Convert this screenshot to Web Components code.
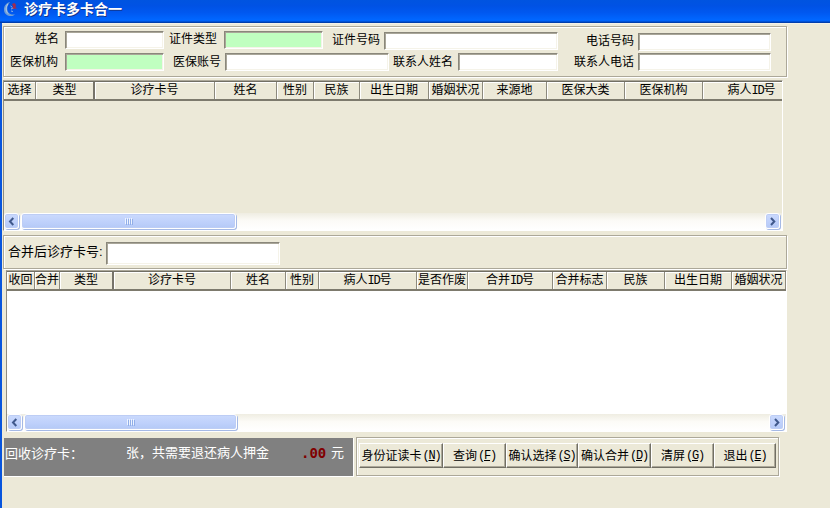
<!DOCTYPE html>
<html lang="zh-CN">
<head>
<meta charset="utf-8">
<title>诊疗卡多卡合一</title>
<style>
html,body{margin:0;height:508px;overflow:hidden;background:#ece9d8}
body{font:12px/14px "Liberation Sans","Noto Sans CJK SC",sans-serif;color:#000}
</style>
</head>
<body>
<card-merge-window></card-merge-window>
<script>
function define(name, html, setup){
  customElements.define(name, class extends HTMLElement{
    connectedCallback(){
      if(this.shadowRoot) return;
      const root=this.attachShadow({mode:'open'});
      const t=document.createElement('template');
      t.innerHTML='<style>:host{box-sizing:border-box}*{box-sizing:border-box}</style>'+html;
      root.append(t.content.cloneNode(true));
      if(setup) setup(this,root);
    }
  });
}

define('title-bar',`<style>
:host{display:flex;height:23px;padding-left:3px;background:linear-gradient(#0054e0 0,#0052e4 25%,#0058f0 55%,#0066ff 85%,#0062f8 91%,#0040b4 96%,#003ba5 100%);color:#fff}
svg{flex:none;margin-top:1px;width:16px;height:17px}
b{margin:1px 0 0 5px;font-size:14px;line-height:16px;white-space:nowrap;text-shadow:1px 1px #10368f}
</style>
<svg viewBox="0 0 16 17"><path d="M7 1C3 2 .8 5 1 9c.3 4 3.500 6 7 6 2 0 3-.6 4-1.500-3 .4-5.500-.2-7-2.500C3.500 8 4 4.500 7 1z" fill="#6f9fd8"/><path d="M5 3C2.500 6 2.500 10 5 12.500" stroke="#b9cfe8" fill="none"/><path d="M7.500 5l2 1.500M8 8l3-1M8 10l2 .5" stroke="#8db2e4" fill="none"/><path d="M9 3l2.500-1L13 4l-.5 2 1.500 2-2-.5L9.500 8 10 5z" fill="#a02c50"/></svg><b><slot></slot></b>`);

define('etched-panel',`<style>
:host{display:flex;border:1px solid #aca899;box-shadow:inset 1px 1px #fff,1px 1px #fff}
</style><slot></slot>`);

define('form-field',`<style>
:host{display:flex;flex:none;white-space:nowrap}
label{flex:none;width:var(--lw);line-height:16px;padding-top:var(--drop,0px)}
i{flex:none;width:var(--iw);height:var(--ih,18px);background:var(--fill,#fff);border:1px solid;border-color:#8a877b #fff #fff #8a877b;box-shadow:inset 1px 1px #a9a699,inset -1px -1px #f5f3e9}
</style><label><slot></slot></label><i></i>`);

define('latin-text',`<style>:host{display:inline-block;font:12px/12px "Liberation Mono",monospace;letter-spacing:-1.2px;vertical-align:baseline}</style><slot></slot>`);

define('grid-header',`<style>
:host{display:flex;height:19px;overflow:hidden;background:#ece9d8;border-bottom:2px solid #7d7a6d}
span{flex:none;height:17px;line-height:17px;text-align:center;white-space:nowrap;border-right:1px solid #8d8a7d;box-shadow:inset 1px 1px #fff}
span.strong{border-right:2px solid #77746a}
</style>`,(el,root)=>{
  el.getAttribute('columns').split(',').forEach((c,i)=>{
    const [label,w]=c.split(':'),s=document.createElement('span');
    s.style.width=w+'px';
    if(i==el.getAttribute('frozen')) s.className='strong';
    s.innerHTML=label.replace('ID','<latin-text>ID</latin-text>');
    root.append(s);
  });
});

define('scroll-bar',`<style>
:host{display:flex;flex:none;height:17px;padding-right:2px;background:linear-gradient(#efede2,#fcfbf7 45%,#fff)}
span{flex:none;height:16px;border:1px solid #fff;border-radius:3px;background:linear-gradient(#cbdafd,#bed0fb 60%,#b4c9f6);box-shadow:inset 0 0 0 1px #bdcdf5,1px 1px #a5b9e5;display:flex;align-items:center;justify-content:center}
.b{width:15px}.t{width:var(--tw);margin-left:2px}.e{margin-left:auto}
svg{display:block}
</style>
<span class="b"><svg width="9" height="9" viewBox="0 0 9 9"><path d="M6.300 1L3 4.500 6.300 8" fill="none" stroke="#40598c" stroke-width="2"/></svg></span>
<span class="t"><svg width="8" height="7" viewBox="0 0 8 7" shape-rendering="crispEdges"><path d="M.5 0v6M2.500 0v6M4.500 0v6M6.500 0v6" stroke="#edf3ff"/><path d="M1.500 1v6M3.500 1v6M5.500 1v6M7.500 1v6" stroke="#91aee8"/></svg></span>
<span class="b e"><svg width="9" height="9" viewBox="0 0 9 9"><path d="M3 1l3.300 3.500L3 8" fill="none" stroke="#40598c" stroke-width="2"/></svg></span>`);

define('data-grid',`<style>
:host{display:flex;flex-direction:column;overflow:hidden;border:1px solid;border-color:#aca899 #fff #fff #8f8c80}
.in{display:flex;flex-direction:column;flex:1;min-height:0;border:solid #716f64;border-width:1px 0 0 var(--edge,1px)}
.body{flex:1;background:var(--body)}
</style><div class="in"><slot name="head"></slot><div class="body"></div><slot name="scroll"></slot></div>`);

define('push-button',`<style>
:host{display:flex;flex:none;align-items:center;justify-content:center;height:25px;white-space:nowrap;border:1px solid;border-color:#fff #716f64 #716f64 #fff;box-shadow:inset -1px -1px #aca899}
latin-text{padding-left:1px}
u{text-underline-offset:1px}
</style><slot></slot><latin-text>(<u></u>)</latin-text>`,(el,root)=>{root.querySelector('u').textContent=el.getAttribute('key')});

define('refund-summary',`<style>
:host{display:flex;flex:none;background:#808080;color:#fff;font-size:13px;line-height:16px;white-space:nowrap;border-bottom:1px solid #fff;border-right:1px solid #fff;padding:7px 0 0 1px}
.a{width:121px;padding-top:1px}.c{width:175px}
b{width:30px;font:bold 14px/17px "DejaVu Sans Mono",monospace;color:#800000}
</style><span class="a">回收诊疗卡：</span><span class="c">张，共需要退还病人押金</span><b>.00</b><span>元</span>`);

define('card-merge-window',`<style>
:host{display:block;width:830px;height:508px;background:#ece9d8}
main{height:485px;border-left:2px solid #0855dd;padding:3px 0 0 1px;display:flex;flex-direction:column;align-items:flex-start;box-shadow:inset 0 1px #f3f1e8}
.search{flex-direction:column;width:784px;height:51px;flex:none}
.row{display:flex;height:22px;align-items:flex-start}
.row.one{padding-top:4px}
.row.two{padding-top:4px;--drop:1px}
.g1{width:780px;height:151px;margin-top:3px;flex:none;--body:#ece9d8;--edge:0px}
.merge{width:784px;height:34px;margin-top:4px;flex:none;font-size:13px;padding:6px 0 0 4px;--ih:23px;--drop:2px}
.g2{width:781px;height:162px;margin:1px 0 0 3px;flex:none;--body:#fff;--edge:0px}
.foot{display:flex;margin-top:5px}
refund-summary{width:350px;height:39px;margin-left:1px;margin-top:1px}
.acts{width:423px;height:39px;margin-left:2px;padding:5px 0 0 2px}
</style>
<title-bar>诊疗卡多卡合一</title-bar>
<main>
<etched-panel class="search">
 <div class="row one">
  <form-field style="margin-left:31px;--lw:30px;--iw:99px">姓名</form-field>
  <form-field style="margin-left:5px;--lw:55px;--iw:99px;--fill:#c0ffc0">证件类型</form-field>
  <form-field style="margin-left:9px;margin-top:1px;--lw:52px;--iw:174px">证件号码</form-field>
  <form-field style="margin-left:28px;margin-top:2px;--lw:52px;--iw:133px">电话号码</form-field>
 </div>
 <div class="row two">
  <form-field style="margin-left:6px;--lw:55px;--iw:99px;--fill:#c0ffc0">医保机构</form-field>
  <form-field style="margin-left:9px;--lw:52px;--iw:164px">医保账号</form-field>
  <form-field style="margin-left:4px;--lw:65px;--iw:100px">联系人姓名</form-field>
  <form-field style="margin-left:16px;--lw:64px;--iw:133px">联系人电话</form-field>
 </div>
</etched-panel>
<data-grid class="g1">
 <grid-header slot="head" frozen="1" columns="选择:32,类型:59,诊疗卡号:120,姓名:62,性别:37,民族:46,出生日期:69,婚姻状况:54,来源地:64,医保大类:78,医保机构:78,病人ID号:98"></grid-header>
 <scroll-bar slot="scroll" style="--tw:215px"></scroll-bar>
</data-grid>
<etched-panel class="merge">
 <form-field style="--lw:98px;--iw:174px">合并后诊疗卡号:</form-field>
</etched-panel>
<data-grid class="g2">
 <grid-header slot="head" frozen="2" columns="收回:28,合并:25,类型:54,诊疗卡号:117,姓名:55,性别:33,病人ID号:98,是否作废:51,合并ID号:85,合并标志:54,民族:58,出生日期:67,婚姻状况:54"></grid-header>
 <scroll-bar slot="scroll" style="--tw:213px"></scroll-bar>
</data-grid>
<div class="foot">
 <refund-summary></refund-summary>
 <etched-panel class="acts">
  <push-button key="N" style="width:84px">身份证读卡</push-button>
  <push-button key="F" style="width:63px">查询</push-button>
  <push-button key="S" style="width:72px">确认选择</push-button>
  <push-button key="D" style="width:73px">确认合并</push-button>
  <push-button key="G" style="width:63px">清屏</push-button>
  <push-button key="E" style="width:62px">退出</push-button>
 </etched-panel>
</div>
</main>`);
</script>
</body>
</html>
